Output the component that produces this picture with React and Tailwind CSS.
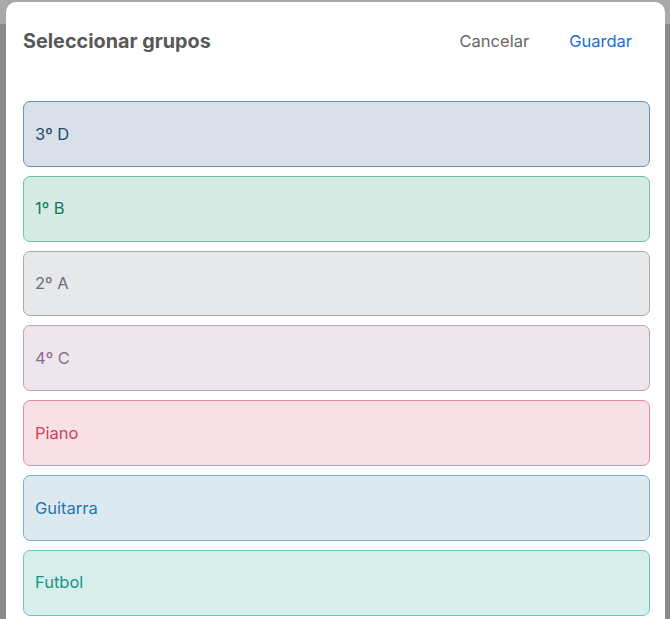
const groups = [
  { name: "3º D", card: "bg-[#d9e0e7] border-[#6d91a9] text-[#1d4b6c]" },
  { name: "1º B", card: "bg-[#d7ebe5] border-[#6ebfa5] text-[#107a5a]" },
  { name: "2º A", card: "bg-[#e7e8ea] border-[#a9aaae] text-[#6b6f78]" },
  { name: "4º C", card: "bg-[#ede6ed] border-[#bba3bb] text-[#8d6b8d]" },
  { name: "Piano", card: "bg-[#f8e1e6] border-[#e68ba1] text-[#d0405f]" },
  { name: "Guitarra", card: "bg-[#dce9f1] border-[#7ab0cd] text-[#1f78a8]" },
  { name: "Futbol", card: "bg-[#d8eeeb] border-[#6cc6be] text-[#17948a]" },
];

export default function App() {
  return (
    <div
      className="h-[619px] overflow-hidden flex flex-col pt-[2px] pl-[6px] pr-[5px] bg-[linear-gradient(to_bottom,#a9a9a9_0,#a9a9a9_24px,#8a8a8a_24px,#8a8a8a_100%)]"
      style={{ fontFamily: "Inter, 'Noto Sans', sans-serif" }}
    >
      <div className="flex-1 bg-white rounded-t-[10px] overflow-hidden flex flex-col">
        <div className="h-[79px] flex items-center pl-[17px] pr-[18px]">
          <h1 className="flex-1 text-[19.8px] font-bold text-[#585858]">Seleccionar grupos</h1>
          <button className="text-[16.5px] text-[#666666] pr-[40px]">Cancelar</button>
          <button className="text-[16.5px] text-[#1a6ed8] pr-[15px]">Guardar</button>
        </div>
        <div className="flex flex-col gap-[9px] pt-[20px] pl-[17px] pr-[15px]">
          {groups.map((g) => (
            <div
              key={g.name}
              className={`h-[65.8px] shrink-0 flex items-center px-[11px] border rounded-[7px] text-[16.5px] ${g.card}`}
            >
              {g.name}
            </div>
          ))}
        </div>
      </div>
    </div>
  );
}
